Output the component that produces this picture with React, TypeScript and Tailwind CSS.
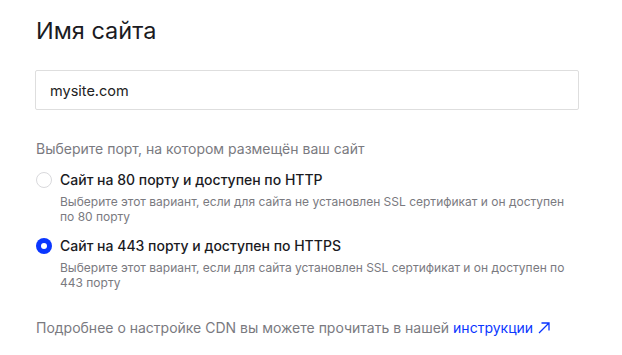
import { useState } from "react"

const options = [
  {
    id: "http",
    title: "Сайт на 80 порту и доступен по HTTP",
    hint: "Выберите этот вариант, если для сайта не установлен SSL сертификат и он доступен по 80 порту",
  },
  {
    id: "https",
    title: "Сайт на 443 порту и доступен по HTTPS",
    hint: "Выберите этот вариант, если для сайта установлен SSL сертификат и он доступен по 443 порту",
  },
]

export default function App() {
  const [port, setPort] = useState("https")

  return (
    <div className="min-h-screen w-full bg-white font-['Inter',sans-serif] antialiased">
      <div className="w-[579px] pl-[35px] pt-[15px]">
        <h1 className="text-[23.5px] leading-[32px] font-normal text-[#1b1b1f] pl-[1px]">Имя сайта</h1>

        <input
          className="mt-[23px] h-[40px] w-full rounded-[2px] border border-[#dedede] px-[14px] text-[14.5px] text-[#222] outline-none"
          defaultValue="mysite.com"
        />

        <p className="mt-[29px] pl-[1px] text-[14px] leading-[20px] text-[#7a7a7f]">
          Выберите порт, на котором размещён ваш сайт
        </p>

        <div className="mt-[11px] flex flex-col gap-[12px] pl-[1px]">
          {options.map((o) => {
            const active = port === o.id
            return (
              <label key={o.id} className="flex cursor-pointer items-start gap-[8px]" onClick={() => setPort(o.id)}>
                <span
                  className={
                    active
                      ? "mt-[2px] flex h-[16px] w-[16px] shrink-0 items-center justify-center rounded-full bg-[#0a36ff]"
                      : "mt-[2px] flex h-[16px] w-[16px] shrink-0 items-center justify-center rounded-full border border-[#d9d9dc] bg-white"
                  }
                >
                  {active && <span className="h-[6px] w-[6px] rounded-full bg-white" />}
                </span>
                <div className="flex flex-col">
                  <span className="text-[14px] leading-[20px] font-medium text-[#1b1b1f]">{o.title}</span>
                  <span className="mt-[4px] text-[12px] leading-[15px] text-[#7a7a7f]">{o.hint}</span>
                </div>
              </label>
            )
          })}
        </div>

        <p className="mt-[28px] pl-[1px] text-[14px] leading-[20px] text-[#7a7a7f]">
          Подробнее о настройке CDN вы можете прочитать в нашей{" "}
          <a href="#" className="inline-flex items-center gap-[4px] text-[#0a36ff]">
            инструкции
            <svg width="14" height="14" viewBox="0 0 14 14" fill="none" stroke="currentColor" strokeWidth="1.3">
              <path d="M2 12L12 2M4.5 2H12V9.5" />
            </svg>
          </a>
        </p>
      </div>
    </div>
  )
}
